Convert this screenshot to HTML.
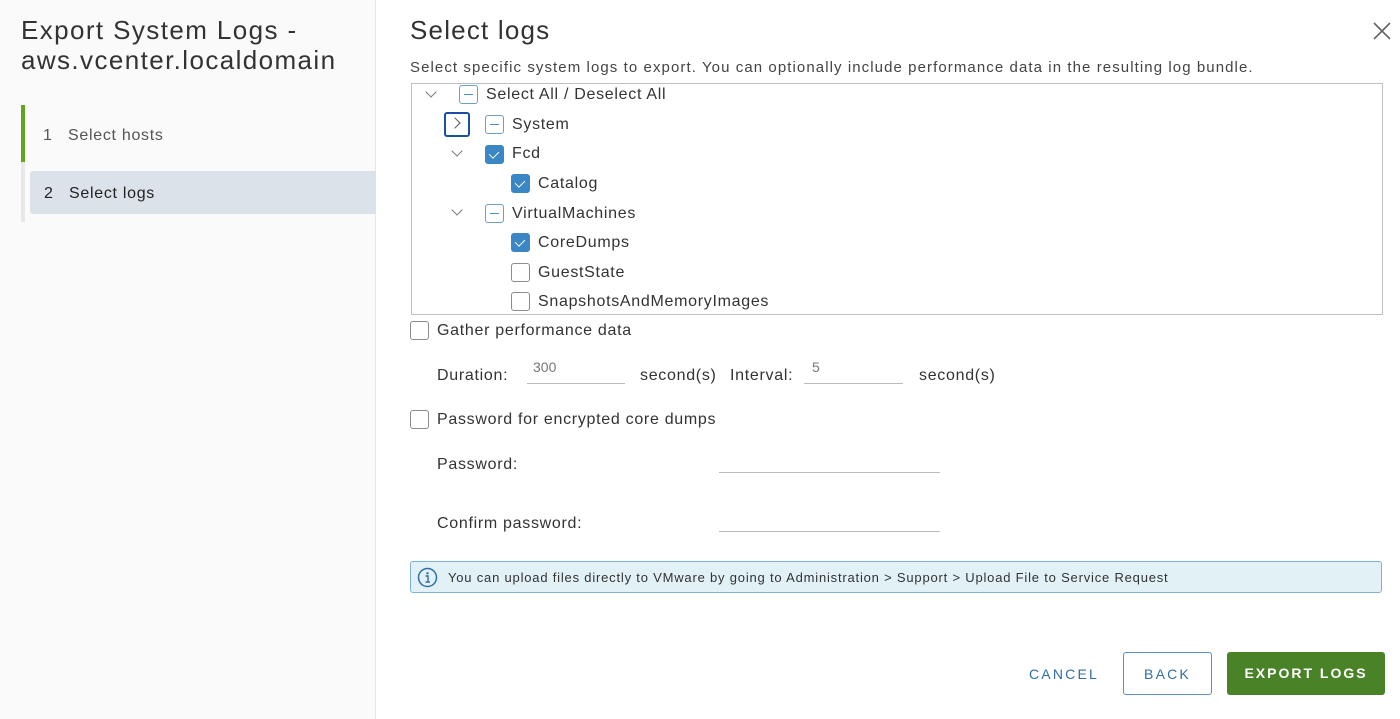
<!DOCTYPE html>
<html><head><meta charset="utf-8"><style>
*{margin:0;padding:0;box-sizing:border-box}
body{width:1400px;height:719px;position:relative;overflow:hidden;background:#fff;font-family:"Liberation Sans",sans-serif;color:#333}
.a{position:absolute;white-space:nowrap}
.left{position:absolute;left:0;top:0;width:376px;height:719px;background:#fafafa;border-right:1px solid #e6e6e6}
.cb{position:absolute;width:19px;height:19px;border:1px solid #8c8c8c;border-radius:3px;background:#fff}
.cb.ind{border-color:#6a9fcc}
.cb.ind:after{content:"";position:absolute;left:4px;top:8px;width:9px;height:1.2px;background:#4f8fc4}
.cb.chk{background:#3b87c6;border-color:#3b87c6}
.cb.chk:after{content:"";position:absolute;left:5px;top:3px;width:5px;height:8px;border-right:1.6px solid #fff;border-bottom:1.6px solid #fff;transform:rotate(45deg)}
.t{font-size:16px;color:#333;letter-spacing:0.7px}
.chev{position:absolute;width:8px;height:8px;border-right:1.3px solid #777;border-bottom:1.3px solid #777;transform:rotate(45deg)}
.ul{position:absolute;height:1px;background:#bbb}
</style></head><body>
<div class="left">
<div class="a" style="left:21px;top:15px;font-size:26px;line-height:30px;color:#333;letter-spacing:1.4px">Export System Logs -<br>aws.vcenter.localdomain</div>
<div class="a" style="left:21px;top:105px;width:4px;height:57px;background:#62a420"></div>
<div class="a" style="left:21px;top:162px;width:4px;height:60px;background:#e8e8e8"></div>
<div class="a t" style="left:43px;top:127px;color:#555">1&nbsp;&nbsp; Select hosts</div>
<div class="a" style="left:30px;top:171px;width:346px;height:43px;background:#dbe2e9;border-radius:3px 0 0 3px"></div>
<div class="a t" style="left:44px;top:185px;color:#222">2&nbsp;&nbsp; Select logs</div>
</div>

<div class="a" style="left:410px;top:15px;font-size:26px;color:#333;letter-spacing:1.2px">Select logs</div>
<div class="a" style="left:1373px;top:22px;width:18px;height:18px">
<svg width="18" height="18"><path d="M1 1L17 17M17 1L1 17" stroke="#666" stroke-width="1.6"/></svg></div>
<div class="a" style="left:410px;top:59px;font-size:15px;color:#444;letter-spacing:1.08px">Select specific system logs to export. You can optionally include performance data in the resulting log bundle.</div>

<div class="a" style="left:411px;top:83px;width:972px;height:232px;border:1px solid #c0c0c0"></div>
<div class="chev" style="left:427px;top:88px"></div>
<div class="cb ind" style="left:459px;top:85px"></div>
<div class="a t" style="left:486px;top:86px">Select All / Deselect All</div>

<div class="a" style="left:444px;top:112px;width:26px;height:25px;border:2px solid #1d4fa1;border-radius:3px"></div>
<div class="a" style="left:451px;top:119px;width:8px;height:8px;border-right:1.3px solid #555;border-bottom:1.3px solid #555;transform:rotate(-45deg)"></div>
<div class="cb ind" style="left:485px;top:115px"></div>
<div class="a t" style="left:512px;top:116px">System</div>

<div class="chev" style="left:453px;top:147px"></div>
<div class="cb chk" style="left:485px;top:145px"></div>
<div class="a t" style="left:512px;top:145px">Fcd</div>

<div class="cb chk" style="left:511px;top:174px"></div>
<div class="a t" style="left:538px;top:175px">Catalog</div>

<div class="chev" style="left:453px;top:206px"></div>
<div class="cb ind" style="left:485px;top:204px"></div>
<div class="a t" style="left:512px;top:205px">VirtualMachines</div>

<div class="cb chk" style="left:511px;top:233px"></div>
<div class="a t" style="left:538px;top:234px">CoreDumps</div>
<div class="cb" style="left:511px;top:263px"></div>
<div class="a t" style="left:538px;top:264px">GuestState</div>
<div class="cb" style="left:511px;top:292px"></div>
<div class="a t" style="left:538px;top:293px">SnapshotsAndMemoryImages</div>

<div class="cb" style="left:410px;top:321px"></div>
<div class="a t" style="left:437px;top:322px">Gather performance data</div>

<div class="a t" style="left:437px;top:367px">Duration:</div>
<div class="a" style="left:533px;top:359px;font-size:14px;color:#777">300</div>
<div class="ul" style="left:527px;top:383px;width:98px"></div>
<div class="a t" style="left:640px;top:367px">second(s)</div>
<div class="a t" style="left:730px;top:367px">Interval:</div>
<div class="a" style="left:812px;top:359px;font-size:14px;color:#777">5</div>
<div class="ul" style="left:804px;top:383px;width:99px"></div>
<div class="a t" style="left:919px;top:367px">second(s)</div>

<div class="cb" style="left:410px;top:410px"></div>
<div class="a t" style="left:437px;top:411px">Password for encrypted core dumps</div>
<div class="a t" style="left:437px;top:456px">Password:</div>
<div class="ul" style="left:719px;top:472px;width:221px"></div>
<div class="a t" style="left:437px;top:515px">Confirm password:</div>
<div class="ul" style="left:719px;top:531px;width:221px"></div>

<div class="a" style="left:410px;top:561px;width:972px;height:32px;background:#e1f1f6;border:1px solid #7fb2d6;border-radius:3px"></div>
<svg class="a" style="left:417px;top:567px" width="21" height="21"><circle cx="10.5" cy="10.5" r="9" fill="none" stroke="#2f6fa8" stroke-width="1.5"/><circle cx="10.5" cy="6.3" r="1.2" fill="#2f6fa8"/><path d="M8.5 9h2.5v6M8.5 15h4.5" stroke="#2f6fa8" stroke-width="1.4" fill="none"/></svg>
<div class="a" style="left:448px;top:570px;font-size:13px;color:#333;letter-spacing:0.8px">You can upload files directly to VMware by going to Administration &gt; Support &gt; Upload File to Service Request</div>

<div class="a" style="left:1029px;top:666px;font-size:14px;letter-spacing:2.2px;color:#2f6fa8">CANCEL</div>
<div class="a" style="left:1123px;top:652px;width:89px;height:43px;border:1px solid #5d8fc1;border-radius:3px;font-size:14px;letter-spacing:2.2px;color:#2f6fa8;text-align:center;line-height:43px">BACK</div>
<div class="a" style="left:1227px;top:652px;width:158px;height:43px;background:#4a8327;border-radius:3px;font-size:14px;letter-spacing:2px;color:#fff;text-align:center;line-height:43px;font-weight:bold">EXPORT LOGS</div>
</body></html>
